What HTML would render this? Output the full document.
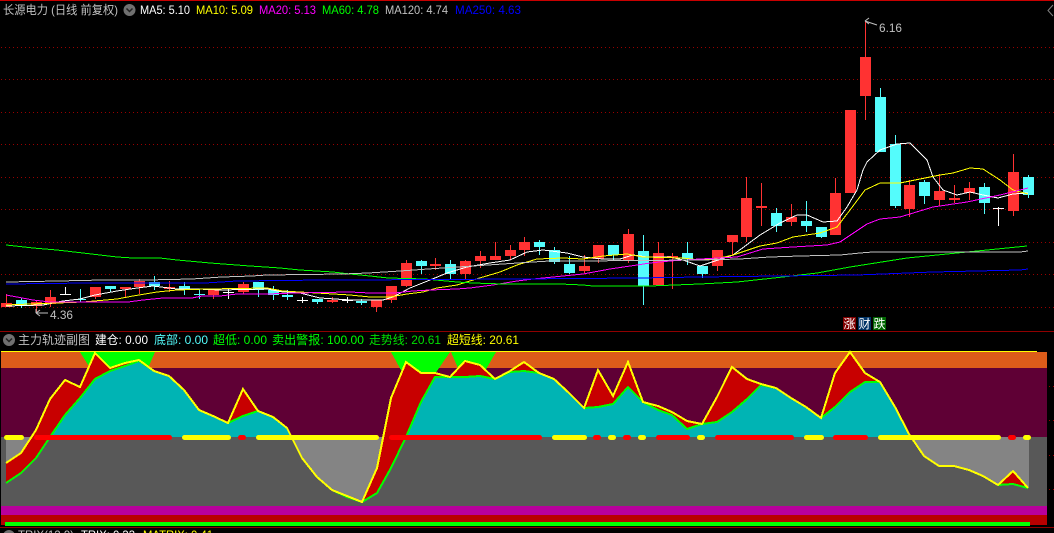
<!DOCTYPE html>
<html><head><meta charset="utf-8"><style>
html,body{margin:0;padding:0;background:#000;width:1054px;height:533px;overflow:hidden}
svg{display:block}
text{font-family:"Liberation Sans","WenQuanYi Zen Hei","Noto Sans CJK SC",sans-serif;font-size:12px}
</style></head><body>
<svg width="1054" height="533" viewBox="0 0 1054 533" xmlns="http://www.w3.org/2000/svg">
<defs>
<clipPath id="ab"><rect x="0" y="340" width="1054" height="97"/></clipPath>
<clipPath id="be"><rect x="0" y="437" width="1054" height="90"/></clipPath>
</defs>
<rect width="1054" height="533" fill="#000"/>
<rect x="0" y="0" width="1054" height="1" fill="#c80000"/>
<rect x="0" y="331" width="1054" height="1" fill="#900000"/>
<rect x="0" y="527" width="1054" height="1" fill="#900000"/>
<g stroke="#9a0000" stroke-width="1" stroke-dasharray="1 3" shape-rendering="crispEdges">
<path d="M1 47.5H1054M1 79.5H1054M1 112.5H1054M1 144.5H1054M1 177.5H1054M1 209.5H1054M1 242.5H1054M1 274.5H1054M1 307.5H1054"/>
<path d="M1049 386.5H1054M1049 420.5H1054M1049 455.5H1054M1049 489.5H1054"/>
</g>
<path d="M1053 5L1048 10.500L1053 16" fill="none" stroke="#808080" stroke-width="1"/>

<!-- red candles -->
<path fill="#ff3232" shape-rendering="crispEdges" d="M1 303h11v4h-11zM6 294h1v13h-1z
M31 302h11v4h-11zM36 301h1v11h-1z
M45 297h11v7h-11zM50 290h1v17h-1z
M90 287h11v10h-11zM95 287h1v12h-1z
M120 287h11v2h-11zM125 287h1v10h-1z
M134 281h11v6h-11zM139 279h1v15h-1z
M164 287h11v2h-11zM169 281h1v11h-1z
M208 290h11v5h-11zM213 290h1v9h-1z
M238 284h11v8h-11zM243 282h1v12h-1z
M327 300h11v2h-11zM332 297h1v6h-1z
M371 300h11v7h-11zM376 300h1v12h-1z
M386 286h11v14h-11zM391 286h1v17h-1z
M401 263h11v23h-11zM406 260h1v27h-1z
M430 264h11v2h-11zM435 258h1v12h-1z
M460 261h11v13h-11zM465 260h1v19h-1z
M475 256h11v5h-11zM480 251h1v17h-1z
M490 256h11v4h-11zM495 242h1v18h-1z
M505 250h11v6h-11zM510 245h1v15h-1z
M519 242h11v8h-11zM524 237h1v19h-1z
M579 266h11v5h-11zM584 255h1v18h-1z
M593 245h11v14h-11zM598 245h1v18h-1z
M623 234h11v26h-11zM628 229h1v34h-1z
M653 253h11v32h-11zM658 242h1v43h-1z
M667 256h11v2h-11zM672 253h1v36h-1z
M712 250h11v16h-11zM717 250h1v21h-1z
M727 235h11v7h-11zM732 235h1v20h-1z
M741 198h11v39h-11zM746 177h1v65h-1z
M756 206h11v2h-11zM761 183h1v43h-1z
M786 217h11v5h-11zM791 204h1v22h-1z
M830 193h11v42h-11zM835 178h1v57h-1z
M845 110h11v83h-11z
M860 57h11v39h-11zM865 21h1v99h-1z
M904 185h11v24h-11zM909 180h1v37h-1z
M934 191h11v9h-11zM939 174h1v32h-1z
M949 198h11v2h-11zM954 185h1v18h-1z
M964 188h11v5h-11zM969 182h1v18h-1z
M1008 172h11v39h-11zM1013 154h1v62h-1z"/>
<!-- cyan candles -->
<path fill="#54fcfc" shape-rendering="crispEdges" d="M16 300h11v6h-11zM21 298h1v10h-1z
M75 299h11v1h-11zM80 289h1v13h-1z
M105 286h11v3h-11zM110 286h1v6h-1z
M149 282h11v4h-11zM154 276h1v14h-1z
M179 286h11v3h-11zM184 282h1v13h-1z
M194 294h11v1h-11zM199 289h1v10h-1z
M253 282h11v8h-11zM258 282h1v15h-1z
M268 290h11v5h-11zM273 286h1v14h-1z
M282 295h11v2h-11zM287 290h1v10h-1z
M312 299h11v3h-11zM317 299h1v5h-1z
M356 301h11v2h-11zM361 299h1v6h-1z
M416 261h11v5h-11zM421 260h1v14h-1z
M445 264h11v10h-11zM450 260h1v19h-1z
M534 242h11v5h-11zM539 240h1v15h-1z
M549 250h11v12h-11zM554 247h1v17h-1z
M564 264h11v9h-11zM569 256h1v18h-1z
M608 245h11v10h-11zM613 245h1v15h-1z
M638 251h11v35h-11zM643 235h1v70h-1z
M682 253h11v6h-11zM687 242h1v23h-1z
M697 266h11v8h-11zM702 266h1v12h-1z
M771 213h11v13h-11zM776 208h1v24h-1z
M801 221h11v5h-11zM806 201h1v31h-1z
M816 227h11v10h-11zM821 227h1v11h-1z
M875 97h11v55h-11zM880 88h1v64h-1z
M890 144h11v62h-11zM895 135h1v73h-1z
M919 182h11v14h-11zM924 180h1v24h-1z
M979 187h11v16h-11zM984 183h1v31h-1z
M1023 177h11v18h-11zM1028 175h1v23h-1z"/>
<!-- white crosses -->
<path fill="#fff" shape-rendering="crispEdges" d="M60 294h11v1h-11zM65 287h1v8h-1z
M223 292h11v1h-11zM228 289h1v10h-1z
M297 300h11v1h-11zM302 297h1v6h-1z
M342 300h11v1h-11zM347 297h1v6h-1z
M993 208h11v1h-11zM998 207h1v19h-1z"/>

<!-- MA lines -->
<g fill="none" stroke-width="1" shape-rendering="crispEdges">
<polyline stroke="#fff" points="6,306 43,305 63,301 80,299 95,295 117,291 137,288 153,286 177,289 197,289 220,290 267,289 283,292 300,293 320,298 350,300 383,300 393,297 410,288 430,280 447,273 467,267 490,263 510,260 527,252 543,250 567,253 583,257 603,259 620,259 633,255 647,257 670,257 683,260 700,266 733,255 760,235 780,223 797,215 807,215 823,222 837,221 847,207 857,190 863,170 867,162 880,150 897,144 910,143 927,160 933,177 943,190 957,195 970,192 983,195 998,198 1013,194 1028,193"/>
<polyline stroke="#ffff00" points="6,305 30,304 57,303 83,302 117,299 133,296 157,292 177,290 207,289 267,288 283,291 350,295 360,296 370,297 390,297 407,294 423,292 437,288 457,285 473,280 483,277 500,272 517,265 537,259 563,258 583,259 603,256 627,254 643,257 683,258 700,260 720,258 733,255 760,246 777,243 793,237 820,233 837,227 850,210 865,190 880,183 900,183 940,175 953,173 970,168 983,169 1000,180 1013,190 1028,194"/>
<polyline stroke="#ff00ff" points="6,295 17,297 33,300 50,302 103,302 128,302 143,300 163,298 192,298 202,296 220,296 237,294 267,294 295,293 350,292 370,293 395,293 413,291 430,290 457,289 470,288 493,285 517,281 533,279 563,276 583,274 610,269 637,265 650,263 670,261 700,259 737,257 763,249 793,247 827,245 840,242 867,224 880,219 900,217 933,207 967,202 1000,195 1028,188"/>
<polyline stroke="#00ff00" points="6,245 33,248 57,250 83,253 117,257 133,258 160,258 177,260 210,263 250,266 280,268 300,270 333,272 350,274 370,276 388,278 425,279 457,282 473,283 503,284 560,284 583,285 593,286 650,286 700,284 737,282 783,277 817,273 850,267 907,258 957,253 987,250 1027,246"/>
<polyline stroke="#c0c0c0" points="6,282 58,281 103,280 147,280 192,279 222,277 252,276 267,275 343,274 368,273 400,271 428,269 443,268 473,266 503,264 533,262 550,261 577,261 700,260 740,259 770,257 800,256 840,255 860,253 873,252 1020,252 1028,251"/>
<polyline stroke="#0000ff" points="6,284 88,283 205,283 237,281 325,280 350,280 517,279 637,278 700,277 857,275 933,272 1020,270 1028,269"/>
</g>

<!-- price labels -->
<path d="M36 313H48M36 313L40 310M36 313L40 316M36 309V313" fill="none" stroke="#c0c0c0" stroke-width="1"/>
<text x="50" y="319" fill="#c0c0c0" textLength="23" lengthAdjust="spacingAndGlyphs">4.36</text>
<path d="M865 21L877 25M865 21L869 18M865 21L869 24" fill="none" stroke="#c0c0c0" stroke-width="1"/>
<text x="879" y="32" fill="#c0c0c0" textLength="23" lengthAdjust="spacingAndGlyphs">6.16</text>

<!-- badges -->
<rect x="843" y="317" width="13" height="13" fill="#800000"/>
<rect x="858" y="317" width="13" height="13" fill="#003366"/>
<rect x="873" y="317" width="13" height="13" fill="#006600"/>
<text x="843.500" y="328" fill="#fff">涨</text>
<text x="858.500" y="328" fill="#fff">财</text>
<text x="873.500" y="328" fill="#fff">跌</text>

<!-- header -->
<text x="3" y="14" fill="#c0c0c0" textLength="115" lengthAdjust="spacingAndGlyphs">长源电力 (日线 前复权)</text>
<circle cx="129.500" cy="10" r="6" fill="#707070"/>
<path d="M126.500 8.500L129.500 11.500L132.500 8.500" fill="none" stroke="#222" stroke-width="1.500"/>
<text x="140" y="14" fill="#fff" textLength="50" lengthAdjust="spacingAndGlyphs">MA5: 5.10</text>
<text x="196" y="14" fill="#ffff00" textLength="57" lengthAdjust="spacingAndGlyphs">MA10: 5.09</text>
<text x="259" y="14" fill="#ff00ff" textLength="57" lengthAdjust="spacingAndGlyphs">MA20: 5.13</text>
<text x="322" y="14" fill="#00ff00" textLength="57" lengthAdjust="spacingAndGlyphs">MA60: 4.78</text>
<text x="385" y="14" fill="#c0c0c0" textLength="63" lengthAdjust="spacingAndGlyphs">MA120: 4.74</text>
<text x="455" y="14" fill="#0000ff" textLength="66" lengthAdjust="spacingAndGlyphs">MA250: 4.63</text>

<!-- sub header -->
<circle cx="9" cy="340" r="6" fill="#707070"/>
<path d="M6 338.500L9 341.500L12 338.500" fill="none" stroke="#222" stroke-width="1.500"/>
<text x="18" y="344" fill="#c0c0c0" textLength="72" lengthAdjust="spacingAndGlyphs">主力轨迹副图</text>
<text x="95" y="344" fill="#fff" textLength="53" lengthAdjust="spacingAndGlyphs">建仓: 0.00</text>
<text x="154" y="344" fill="#54fcfc" textLength="54" lengthAdjust="spacingAndGlyphs">底部: 0.00</text>
<text x="213" y="344" fill="#00ff00" textLength="54" lengthAdjust="spacingAndGlyphs">超低: 0.00</text>
<text x="272" y="344" fill="#00ff00" textLength="92" lengthAdjust="spacingAndGlyphs">卖出警报: 100.00</text>
<text x="369" y="344" fill="#00e000" textLength="72" lengthAdjust="spacingAndGlyphs">走势线: 20.61</text>
<text x="447" y="344" fill="#ffff00" textLength="72" lengthAdjust="spacingAndGlyphs">超短线: 20.61</text>

<!-- sub panel background -->
<rect x="1" y="351" width="1036" height="1" fill="#ffff00"/>
<rect x="1" y="352" width="1046" height="16" fill="#dc5c1a"/>
<rect x="1" y="368" width="1046" height="69" fill="#5f0035"/>
<rect x="1" y="437" width="1046" height="69" fill="#585858"/>
<rect x="1" y="506" width="1046" height="9" fill="#b8009c"/>
<rect x="1" y="515" width="1046" height="10" fill="#b80000"/>
<rect x="5" y="522" width="1025" height="4" fill="#00ff00"/>

<!-- green triangles -->
<g fill="#00ff00" shape-rendering="crispEdges">
<polygon points="80,352 90,368 148,368 155,352"/>
<polygon points="391,352 402,372 435,374 450,352"/>
<polygon points="451,352 458,368 485,371 496,352"/>
</g>

<!-- light gray -->
<polygon clip-path="url(#be)" fill="#848484" shape-rendering="crispEdges" points="6,437 6,463 21,453 36,430 50,399 287,428 302,458 317,477 332,490 347,496 362,502 377,468 391,398 406,437 895,407 909,434 924,456 939,466 954,466 969,470 983,476 998,485 1013,471 1029,488 1029,437"/>

<!-- red area -->
<polygon fill="#c80000" shape-rendering="crispEdges" points="6,463 21,453 36,430 50,399 65,380 80,387 95,353 110,368 125,363 139,360 154,371 169,376 184,390 199,410 213,416 228,423 243,389 258,411 273,417 287,428 302,458 317,477 332,490 347,496 362,502 377,468 391,398 406,362 421,373 435,373 450,377 465,361 480,365 495,379 510,371 524,362 539,373 554,379 569,393 584,408 598,370 613,396 628,362 643,402 658,406 672,412 687,421 702,424 717,397 732,367 747,379 761,384 776,388 791,398 806,407 821,418 835,373 850,352 865,373 880,382 895,407 909,434 924,456 939,466 954,466 969,470 983,476 998,485 1013,471 1028,488 1013,484 998,485 983,476 969,470 954,466 939,466 924,456 909,434 895,407 880,382 865,382 850,392 835,407 821,418 806,407 791,398 776,388 761,385 747,399 732,412 717,422 702,424 687,429 672,415 658,410 643,402 628,387 613,404 598,407 584,408 569,393 554,379 539,373 524,371 510,372 495,379 480,376 465,377 450,377 435,377 421,402 406,437 391,468 377,493 362,502 347,496 332,490 317,477 302,458 287,428 273,417 258,411 243,416 228,423 213,416 199,410 184,390 169,376 154,371 139,361 125,366 110,371 95,379 80,398 65,415 50,437 36,458 21,473 6,483"/>

<!-- teal -->
<polygon clip-path="url(#ab)" fill="#00b4b4" shape-rendering="crispEdges" points="50,437 65,415 80,398 95,379 110,371 125,366 139,361 154,371 169,376 184,390 199,410 213,416 228,423 243,416 258,411 273,417 287,428 302,458 302,437 406,437 421,402 435,377 450,377 465,377 480,376 495,379 510,372 524,371 539,373 554,379 569,393 584,408 598,407 613,404 628,387 643,402 658,410 672,415 687,429 702,424 717,422 732,412 747,399 761,385 776,388 791,398 806,407 821,418 835,407 850,392 865,382 880,382 895,407 909,434 912,437"/>

<!-- lines -->
<g fill="none" stroke-width="2" shape-rendering="crispEdges">
<polyline stroke="#00ff00" points="6,483 21,473 36,458 50,437 65,415 80,398 95,379 110,371 125,366 139,361 154,371 169,376 184,390 199,410 213,416 228,423 243,416 258,411 273,417 287,428 302,458 317,477 332,490 347,497 362,502 377,493 391,468 406,437 421,402 435,377 450,377 465,377 480,376 495,379 510,372 524,371 539,373 554,379 569,393 584,408 598,407 613,404 628,387 643,402 658,410 672,415 687,429 702,424 717,422 732,412 747,399 761,385 776,388 791,398 806,407 821,418 835,407 850,392 865,382 880,382 895,407 909,434 924,456 939,466 954,466 969,470 983,476 998,485 1013,484 1028,488"/>
<polyline stroke="#ffff00" points="6,463 21,453 36,430 50,399 65,380 80,387 95,353 110,368 125,363 139,360 154,371 169,376 184,390 199,410 213,416 228,423 243,389 258,411 273,417 287,428 302,458 317,477 332,490 347,496 362,502 377,468 391,398 406,362 421,373 435,373 450,377 465,361 480,365 495,379 510,371 524,362 539,373 554,379 569,393 584,408 598,370 613,396 628,362 643,402 658,406 672,412 687,421 702,424 717,397 732,367 747,379 761,384 776,388 791,398 806,407 821,418 835,373 850,352 865,373 880,382 895,407 909,434 924,456 939,466 954,466 969,470 983,476 998,485 1013,471 1028,488"/>
</g>

<!-- dashes -->
<g shape-rendering="geometricPrecision">
<g fill="#ffff00">
<rect x="4" y="435" width="20" height="5" rx="2.500"/>
<rect x="182" y="435" width="49" height="5" rx="2.500"/>
<rect x="256" y="435" width="123" height="5" rx="2.500"/>
<rect x="552" y="435" width="35" height="5" rx="2.500"/>
<rect x="608" y="435" width="8" height="5" rx="2.500"/>
<rect x="638" y="435" width="8" height="5" rx="2.500"/>
<rect x="697" y="435" width="8" height="5" rx="2.500"/>
<rect x="804" y="435" width="20" height="5" rx="2.500"/>
<rect x="878" y="435" width="123" height="5" rx="2.500"/>
<rect x="1023" y="435" width="8" height="5" rx="2.500"/>
</g>
<g fill="#ff0000">
<rect x="34" y="435" width="138" height="5" rx="2.500"/>
<rect x="238" y="435" width="8" height="5" rx="2.500"/>
<rect x="389" y="435" width="153" height="5" rx="2.500"/>
<rect x="593" y="435" width="8" height="5" rx="2.500"/>
<rect x="623" y="435" width="8" height="5" rx="2.500"/>
<rect x="656" y="435" width="34" height="5" rx="2.500"/>
<rect x="715" y="435" width="79" height="5" rx="2.500"/>
<rect x="833" y="435" width="35" height="5" rx="2.500"/>
<rect x="1008" y="435" width="8" height="5" rx="2.500"/>
</g>
</g>

<!-- bottom header (clipped) -->
<circle cx="9" cy="536" r="6" fill="#707070"/>
<text x="18" y="539" fill="#c0c0c0" textLength="56" lengthAdjust="spacingAndGlyphs">TRIX(12,9)</text>
<text x="81" y="539" fill="#fff" textLength="54" lengthAdjust="spacingAndGlyphs">TRIX: 0.33</text>
<text x="143" y="539" fill="#ffff00" textLength="70" lengthAdjust="spacingAndGlyphs">MATRIX: 0.41</text>
</svg>
</body></html>
